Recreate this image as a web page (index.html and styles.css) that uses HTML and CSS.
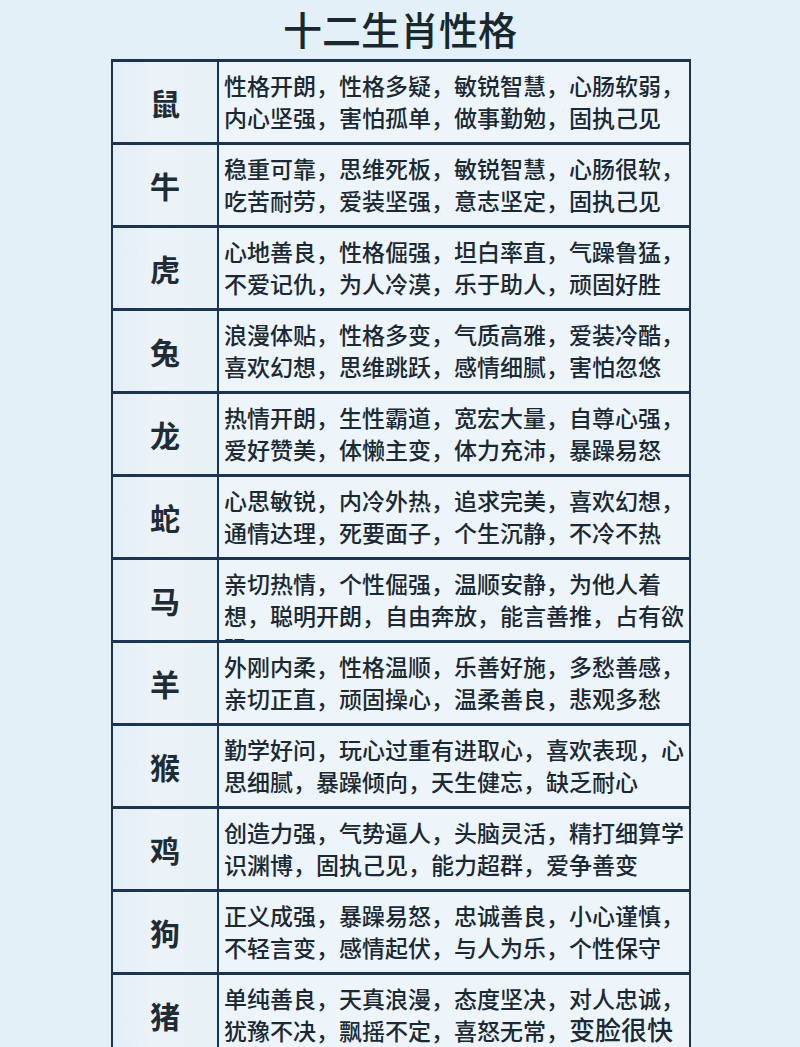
FILE: index.html
```html
<!DOCTYPE html>
<html lang="zh-CN">
<head>
<meta charset="utf-8">
<title>十二生肖性格</title>
<link rel="stylesheet" href="styles.css">
</head>
<body>
<h1 class="title">十二生肖性格</h1>
<div class="sheet">
  <div class="row"><div class="animal">鼠</div><div class="desc">性格开朗，性格多疑，敏锐智慧，心肠软弱，内心坚强，害怕孤单，做事勤勉，固执己见</div></div>
  <div class="row"><div class="animal">牛</div><div class="desc">稳重可靠，思维死板，敏锐智慧，心肠很软，吃苦耐劳，爱装坚强，意志坚定，固执己见</div></div>
  <div class="row"><div class="animal">虎</div><div class="desc">心地善良，性格倔强，坦白率直，气躁鲁猛，不爱记仇，为人冷漠，乐于助人，顽固好胜</div></div>
  <div class="row"><div class="animal">兔</div><div class="desc">浪漫体贴，性格多变，气质高雅，爱装冷酷，喜欢幻想，思维跳跃，感情细腻，害怕忽悠</div></div>
  <div class="row"><div class="animal">龙</div><div class="desc">热情开朗，生性霸道，宽宏大量，自尊心强，爱好赞美，体懒主变，体力充沛，暴躁易怒</div></div>
  <div class="row"><div class="animal">蛇</div><div class="desc">心思敏锐，内冷外热，追求完美，喜欢幻想，通情达理，死要面子，个生沉静，不冷不热</div></div>
  <div class="row"><div class="animal">马</div><div class="desc">亲切热情，个性倔强，温顺安静，为他人着想，聪明开朗，自由奔放，能言善推，占有欲强</div></div>
  <div class="row"><div class="animal">羊</div><div class="desc">外刚内柔，性格温顺，乐善好施，多愁善感，亲切正直，顽固操心，温柔善良，悲观多愁</div></div>
  <div class="row"><div class="animal">猴</div><div class="desc">勤学好问，玩心过重有进取心，喜欢表现，心思细腻，暴躁倾向，天生健忘，缺乏耐心</div></div>
  <div class="row"><div class="animal">鸡</div><div class="desc">创造力强，气势逼人，头脑灵活，精打细算学识渊博，固执己见，能力超群，爱争善变</div></div>
  <div class="row"><div class="animal">狗</div><div class="desc">正义成强，暴躁易怒，忠诚善良，小心谨慎，不轻言变，感情起伏，与人为乐，个性保守</div></div>
  <div class="row"><div class="animal">猪</div><div class="desc">单纯善良，天真浪漫，态度坚决，对人忠诚，犹豫不决，飘摇不定，喜怒无常，<span class="big">变脸很快</span></div></div>
</div>
</body>
</html>
```
FILE: styles.css
```css
html, body {
  margin: 0;
  padding: 0;
}
body {
  background: #e3f0f8;
  font-family: "Noto Sans CJK SC", "Noto Sans", sans-serif;
  color: #1c2a33;
  height: 1047px;
  overflow: hidden;
}
.title {
  margin: 0;
  height: 59px;
  box-sizing: border-box;
  padding-top: 2px;
  text-align: center;
  font-size: 39px;
  line-height: 52px;
  font-weight: 500;
  color: #18282e;
}
.sheet {
  margin-left: 111px;
  width: 580px;
  border-top: 3px solid #1b3550;
  border-left: 2px solid #1b3550;
  border-right: 2px solid #1b3550;
  box-sizing: border-box;
}
.row {
  display: grid;
  grid-template-columns: 106px 1fr;
  height: 83px;
  box-sizing: border-box;
  border-bottom: 3px solid #1b3550;
}
.animal {
  border-right: 2px solid #1b3550;
  background: linear-gradient(90deg, #e2edf5 0%, #ecf3f8 40%, #e8f1f7 100%);
  display: flex;
  align-items: center;
  justify-content: center;
  font-size: 30px;
  font-weight: 700;
  color: #1e2c36;
}
.desc {
  background: #edf5fa;
  padding: 7px 2px 0 5px;
  font-size: 23px;
  line-height: 32px;
  font-weight: 500;
  overflow: hidden;
  color: #1a2934;
}
.big {
  font-size: 26px;
  line-height: 1;
}
```
